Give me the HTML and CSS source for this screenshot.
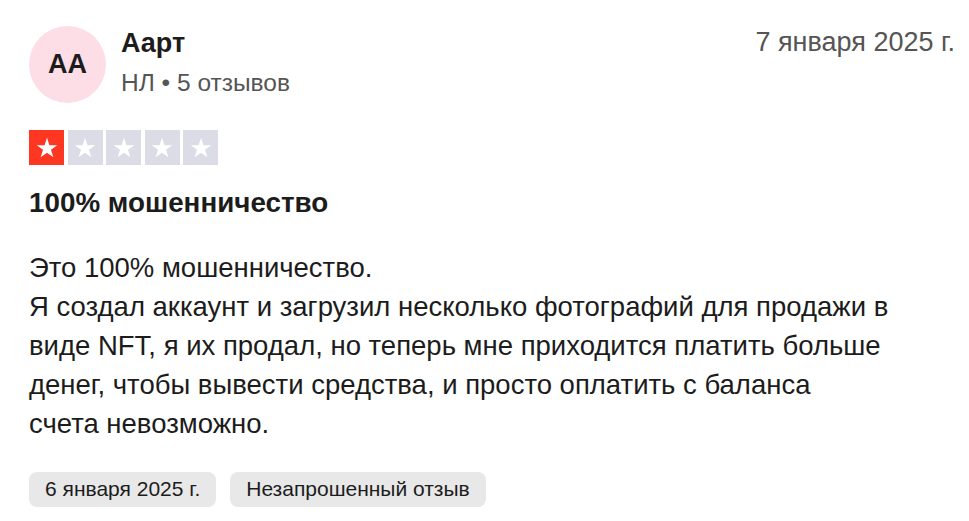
FILE: index.html
```html
<!DOCTYPE html>
<html lang="ru">
<head>
<meta charset="utf-8">
<link rel="stylesheet" href="styles.css">
</head>
<body>
<article class="review">
  <header class="head">
    <div class="avatar">AA</div>
    <div class="who">
      <div class="name">Аарт</div>
      <div class="meta">НЛ • 5 отзывов</div>
    </div>
    <time class="date">7 января 2025 г.</time>
  </header>
  <div class="stars">
    <span class="star on"><svg viewBox="0 0 24 24"><path d="M12 3.2l2.1 6.4h6.7l-5.4 3.9 2.1 6.4L12 16l-5.5 3.9 2.1-6.4-5.4-3.9h6.7z"/></svg></span>
    <span class="star"><svg viewBox="0 0 24 24"><path d="M12 3.2l2.1 6.4h6.7l-5.4 3.9 2.1 6.4L12 16l-5.5 3.9 2.1-6.4-5.4-3.9h6.7z"/></svg></span>
    <span class="star"><svg viewBox="0 0 24 24"><path d="M12 3.2l2.1 6.4h6.7l-5.4 3.9 2.1 6.4L12 16l-5.5 3.9 2.1-6.4-5.4-3.9h6.7z"/></svg></span>
    <span class="star"><svg viewBox="0 0 24 24"><path d="M12 3.2l2.1 6.4h6.7l-5.4 3.9 2.1 6.4L12 16l-5.5 3.9 2.1-6.4-5.4-3.9h6.7z"/></svg></span>
    <span class="star"><svg viewBox="0 0 24 24"><path d="M12 3.2l2.1 6.4h6.7l-5.4 3.9 2.1 6.4L12 16l-5.5 3.9 2.1-6.4-5.4-3.9h6.7z"/></svg></span>
  </div>
  <h2 class="title">100% мошенничество</h2>
  <p class="body">Это 100% мошенничество.<br>Я создал аккаунт и загрузил несколько фотографий для продажи в<br>виде NFT, я их продал, но теперь мне приходится платить больше<br>денег, чтобы вывести средства, и просто оплатить с баланса<br>счета невозможно.</p>
  <div class="tags">
    <span class="tag">6 января 2025 г.</span>
    <span class="tag">Незапрошенный отзыв</span>
  </div>
</article>
</body>
</html>
```

FILE: styles.css
```css
* { box-sizing: border-box; }
html, body { margin: 0; background: #fff; }
body {
  font-family: "Liberation Sans", Arial, sans-serif;
  color: #1c1c1c;
}
.review {
  padding: 26px 14px 0 29px;
  width: 969px;
}
.head {
  display: flex;
  align-items: flex-start;
  height: 77px;
}
.avatar {
  width: 77px;
  height: 77px;
  border-radius: 50%;
  background: #fddde6;
  display: flex;
  align-items: center;
  justify-content: center;
  font-weight: 700;
  font-size: 27px;
  color: #1c1c1c;
  flex: none;
}
.who {
  margin-left: 15px;
  margin-top: 1px;
  flex: 1;
}
.name {
  font-weight: 700;
  font-size: 27px;
  line-height: 32px;
}
.meta {
  margin-top: 10px;
  font-size: 24.5px;
  line-height: 28px;
  color: #555;
}
.date {
  margin-top: 0;
  font-size: 27px;
  line-height: 32px;
  color: #555;
}
.stars {
  display: flex;
  gap: 3.5px;
  margin-top: 27px;
}
.star {
  width: 35px;
  height: 35px;
  background: #dcdce6;
  display: flex;
  align-items: center;
  justify-content: center;
}
.star.on { background: #ff3722; }
.star svg { width: 28px; height: 28px; fill: #fff; }
.title {
  margin: 20.5px 0 0;
  font-size: 27.8px;
  line-height: 34px;
  font-weight: 700;
}
.body {
  margin: 28.5px 0 0;
  font-size: 27.5px;
  line-height: 39px;
}
.tags {
  display: flex;
  gap: 14px;
  margin-top: 28.5px;
}
.tag {
  background: #e8e8e8;
  border-radius: 8px;
  padding: 0 16px;
  height: 35px;
  display: flex;
  align-items: center;
  font-size: 21px;
  color: #1c1c1c;
}
```
